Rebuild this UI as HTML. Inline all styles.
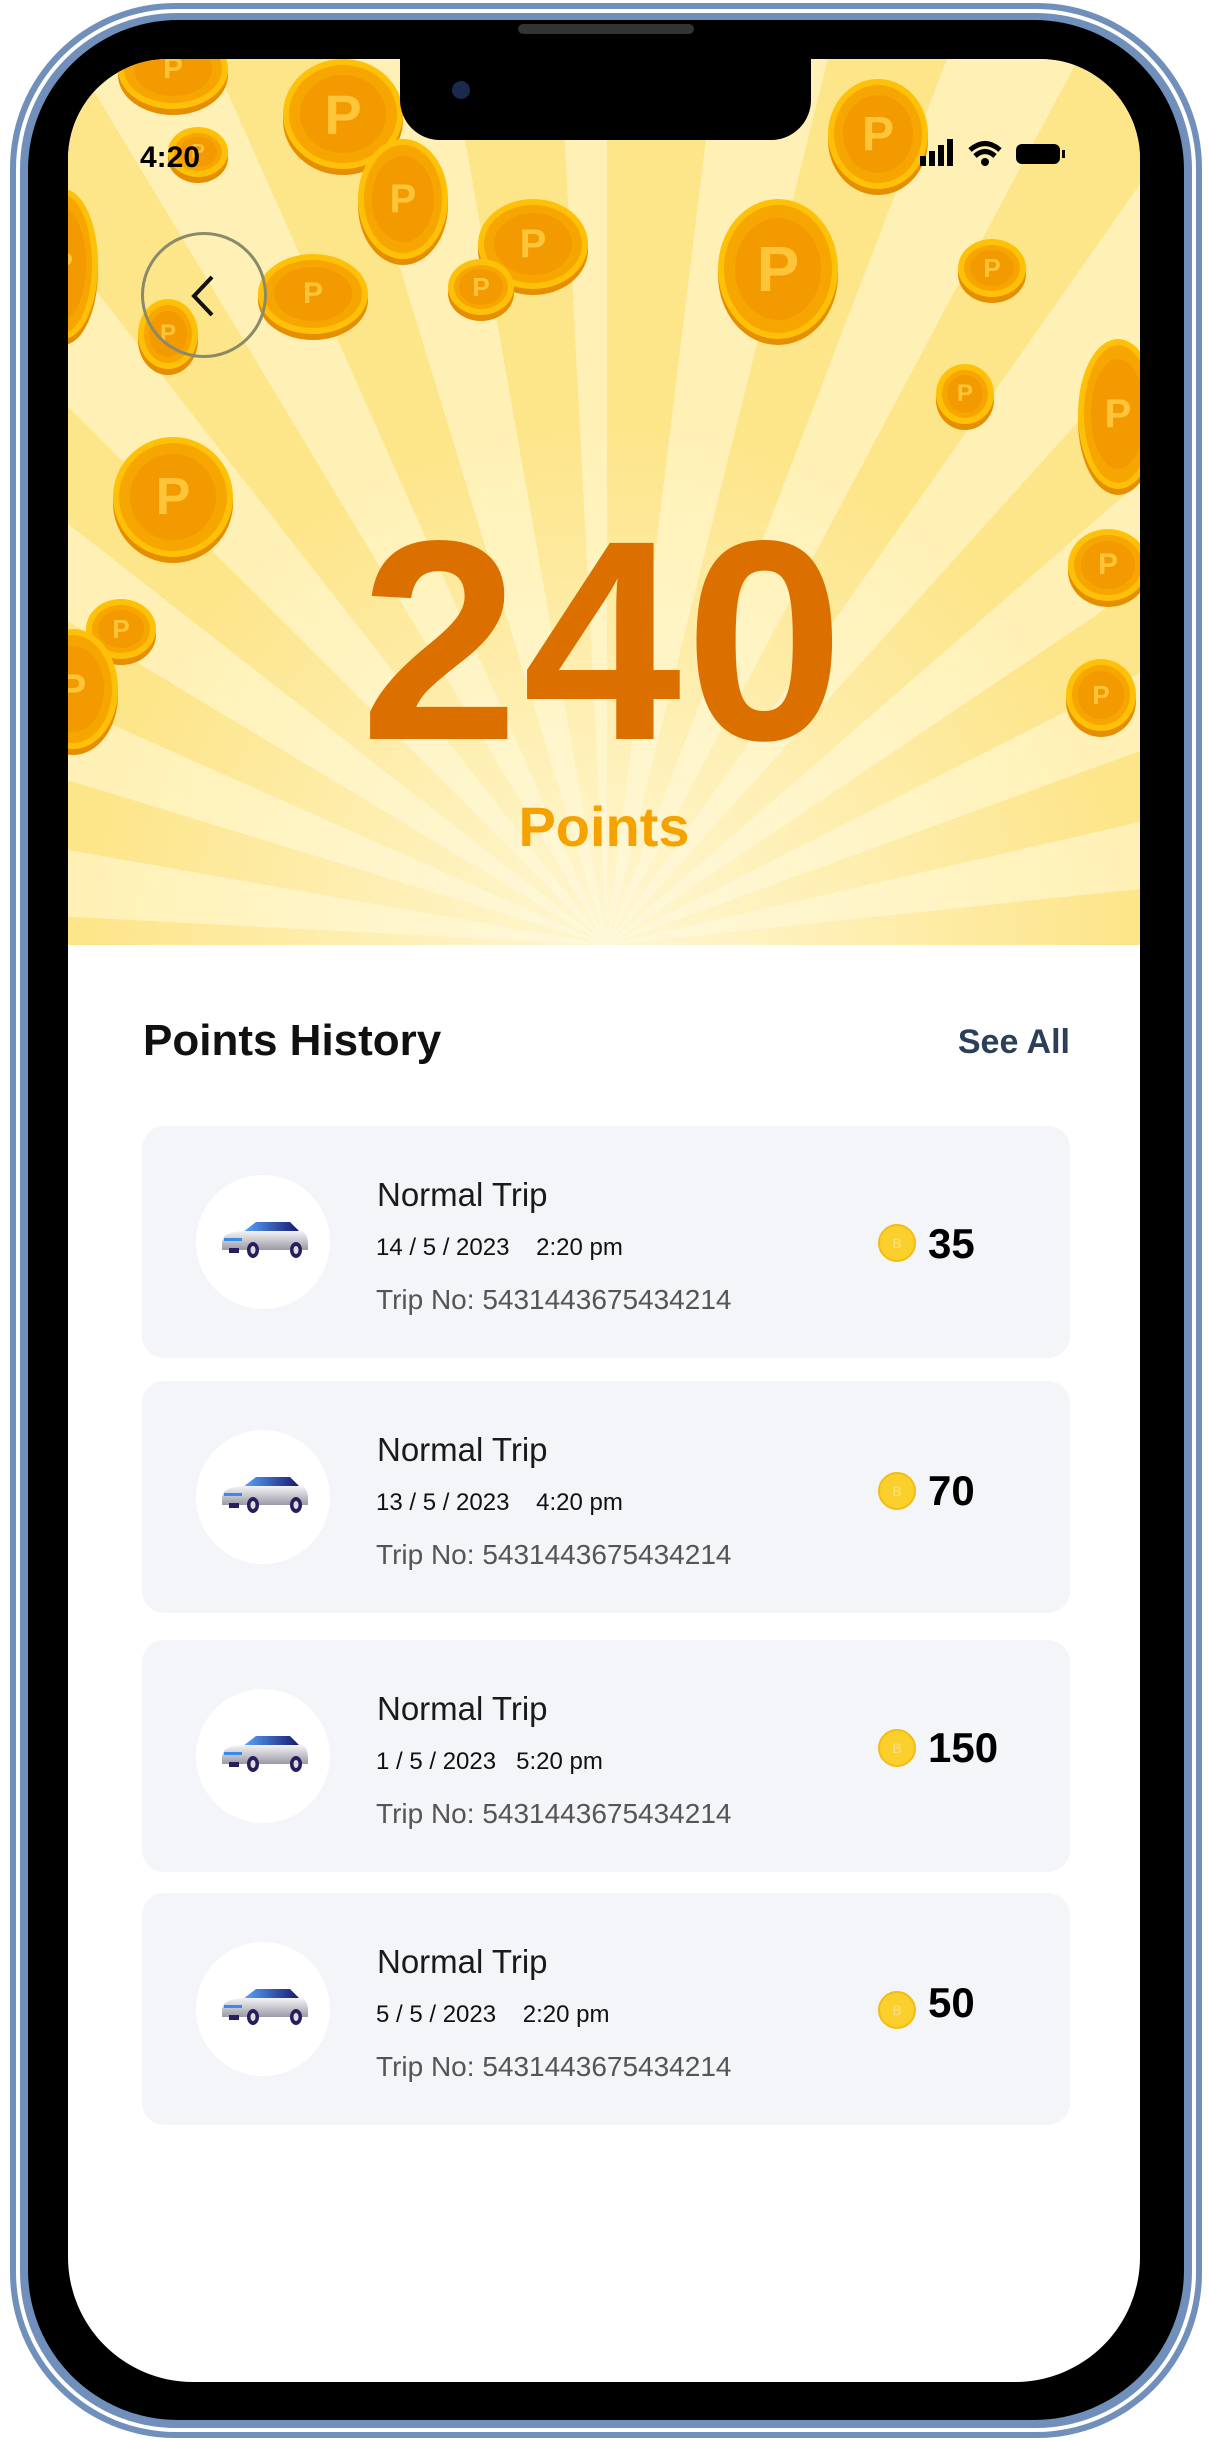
<!DOCTYPE html>
<html><head><meta charset="utf-8"><style>
*{margin:0;padding:0;box-sizing:border-box}
body{width:1208px;height:2440px;background:#fff;position:relative;overflow:hidden;font-family:"Liberation Sans",sans-serif}
.frame{position:absolute;left:10px;top:3px;width:1192px;height:2435px;border-radius:165px;background:#7090bb;}
.frame2{position:absolute;left:16px;top:9px;width:1180px;height:2423px;border-radius:160px;background:#fff;}
.frame3{position:absolute;left:20px;top:13px;width:1172px;height:2415px;border-radius:156px;background:#7090bb;}
.bezel{position:absolute;left:28px;top:20px;width:1156px;height:2400px;border-radius:150px;background:#000;}
.screen{position:absolute;left:68px;top:59px;width:1072px;height:2323px;border-radius:100px 100px 125px 125px;background:#fff;overflow:hidden}
.hdr{position:absolute;left:0;top:0;width:1072px;height:886px;background:
repeating-conic-gradient(from 0deg at 539px 886px,#fde58a 0deg 7deg,#fff1b6 7deg 14deg);}
.glow{position:absolute;left:0;top:0;width:1072px;height:886px;background:radial-gradient(ellipse 520px 520px at 539px 886px,rgba(255,250,225,.85),rgba(255,250,225,0) 100%)}
.coin{position:absolute;border-radius:50%;background:#f7a500;border:6px solid #ffc107;box-shadow:0 6px 0 #e58e00;color:#e98600;font-weight:bold;text-align:center}
.coin i{position:absolute;inset:10%;border-radius:50%;background:#f39a00;font-style:normal;display:flex;align-items:center;justify-content:center;color:#ffc53a}
.notch{position:absolute;left:332px;top:0;width:411px;height:81px;background:#000;border-radius:0 0 40px 40px}
.cam{position:absolute;left:52px;top:22px;width:18px;height:18px;border-radius:50%;background:#1a2a4a}
.time{position:absolute;left:72px;top:82px;font-size:30px;font-weight:bold;color:#000}
.back{position:absolute;left:73px;top:173px;width:126px;height:126px;border-radius:50%;border:3px solid #8a8a6a}
.big{position:absolute;left:0;width:1072px;top:440px;text-align:center;font-size:285px;font-weight:bold;color:#db6f00;line-height:1;letter-spacing:4px}
.pts{position:absolute;left:0;width:1072px;top:735px;text-align:center;font-size:56px;font-weight:bold;color:#f5a200}
.ph{position:absolute;left:75px;top:957px;font-size:44px;font-weight:bold;color:#111}
.see{position:absolute;right:70px;top:964px;font-size:34px;font-weight:bold;color:#2b3e5a}
.card{position:absolute;left:74px;width:928px;height:232px;border-radius:22px;background:#f4f5f9}
.circ{position:absolute;left:54px;top:49px;width:134px;height:134px;border-radius:50%;background:#fff}
.car{position:absolute;left:24px;top:45px}
.t1{position:absolute;left:235px;top:50px;font-size:33px;color:#1a1a1a}
.t2{position:absolute;left:234px;top:108px;font-size:24px;color:#111;white-space:pre}
.t3{position:absolute;left:234px;top:158px;font-size:28px;color:#555}
.gc{position:absolute;left:736px;top:98px;width:38px;height:38px;border-radius:50%;background:#fcd02c;border:2px solid #f2bd14;color:#f8e088;font-size:14px;text-align:center;line-height:34px}
.num{position:absolute;left:786px;top:94px;font-size:42px;font-weight:bold;color:#000}
</style></head><body>
<div class="frame"></div><div class="frame2"></div><div class="frame3"></div><div class="bezel"></div>
<div style="position:absolute;left:518px;top:24px;width:176px;height:10px;border-radius:5px;background:#333"></div>
<div class="screen">
<div class="hdr"></div><div class="glow"></div>
<div class="coin" style="left:215px;top:0px;width:120px;height:110px"><i style="font-size:56px">P</i></div>
<div class="coin" style="left:290px;top:80px;width:90px;height:120px"><i style="font-size:40px">P</i></div>
<div class="coin" style="left:410px;top:140px;width:110px;height:90px"><i style="font-size:40px">P</i></div>
<div class="coin" style="left:380px;top:200px;width:66px;height:56px"><i style="font-size:26px">P</i></div>
<div class="coin" style="left:190px;top:195px;width:110px;height:80px"><i style="font-size:30px">P</i></div>
<div class="coin" style="left:650px;top:140px;width:120px;height:140px"><i style="font-size:64px">P</i></div>
<div class="coin" style="left:760px;top:20px;width:100px;height:110px"><i style="font-size:48px">P</i></div>
<div class="coin" style="left:890px;top:180px;width:68px;height:58px"><i style="font-size:26px">P</i></div>
<div class="coin" style="left:868px;top:305px;width:58px;height:60px"><i style="font-size:24px">P</i></div>
<div class="coin" style="left:1010px;top:280px;width:80px;height:150px"><i style="font-size:40px">P</i></div>
<div class="coin" style="left:1000px;top:470px;width:80px;height:72px"><i style="font-size:30px">P</i></div>
<div class="coin" style="left:998px;top:600px;width:70px;height:72px"><i style="font-size:26px">P</i></div>
<div class="coin" style="left:45px;top:378px;width:120px;height:120px"><i style="font-size:52px">P</i></div>
<div class="coin" style="left:18px;top:540px;width:70px;height:60px"><i style="font-size:26px">P</i></div>
<div class="coin" style="left:-40px;top:570px;width:90px;height:120px"><i style="font-size:40px">P</i></div>
<div class="coin" style="left:-40px;top:130px;width:70px;height:150px"><i style="font-size:30px">P</i></div>
<div class="coin" style="left:70px;top:240px;width:60px;height:70px"><i style="font-size:24px">P</i></div>
<div class="coin" style="left:50px;top:-30px;width:110px;height:80px"><i style="font-size:30px">P</i></div>
<div class="coin" style="left:100px;top:68px;width:60px;height:50px"><i style="font-size:20px">P</i></div>
<div class="notch"><div class="cam"></div></div>
<div class="time">4:20</div>
<svg style="position:absolute;left:852px;top:75px" width="160" height="40" viewBox="0 0 160 40">
<rect x="0" y="22" width="6" height="10" fill="#000"/><rect x="9" y="17" width="6" height="15" fill="#000"/><rect x="18" y="11" width="6" height="21" fill="#000"/><rect x="27" y="5" width="6" height="27" fill="#000"/>
<path d="M50 16 Q65 3 80 16 M55 22 Q65 13 75 22" stroke="#000" stroke-width="5" fill="none"/><circle cx="65" cy="28" r="4" fill="#000"/>
<rect x="96" y="10" width="44" height="20" rx="6" fill="#000"/><rect x="142" y="16" width="3" height="8" fill="#000"/>
</svg>
<div class="back"></div>
<svg style="position:absolute;left:120px;top:215px" width="30" height="44" viewBox="0 0 30 44"><path d="M24 3 L6 22 L24 41" stroke="#111" stroke-width="4" fill="none"/></svg>
<div class="big">240</div>
<div class="pts">Points</div>
<div class="ph">Points History</div>
<div class="see">See All</div>

<div class="card" style="top:1067px"><div class="circ"><svg class="car" width="90" height="40" viewBox="0 0 90 40"><defs><linearGradient id="g" x1="0" x2="1"><stop offset="0" stop-color="#5aa6ff"/><stop offset="1" stop-color="#15176b"/></linearGradient><linearGradient id="b" x1="0" y1="0" x2="0" y2="1"><stop offset="0" stop-color="#f4f4f6"/><stop offset="1" stop-color="#9a9aa6"/></linearGradient></defs><path d="M23 12 L36 2 H70 L80 12 Z" fill="url(#g)"/><path d="M4 17 Q8 12 23 11 H82 Q88 14 88 24 V30 H2 V22 Z" fill="url(#b)"/><rect x="4" y="18" width="18" height="3" fill="#3a8af0"/><rect x="9" y="28" width="10" height="5" fill="#2a1d5e"/><ellipse cx="33" cy="30" rx="6" ry="8" fill="#2a1d5e"/><ellipse cx="33" cy="30" rx="2.5" ry="4" fill="#ddd"/><ellipse cx="76" cy="30" rx="6" ry="8" fill="#2a1d5e"/><ellipse cx="76" cy="30" rx="2.5" ry="4" fill="#ddd"/></svg></div>
<div class="t1">Normal Trip</div><div class="t2">14 / 5 / 2023    2:20 pm</div><div class="t3">Trip No: 5431443675434214</div><div class="gc">B</div><div class="num">35</div></div>

<div class="card" style="top:1322px"><div class="circ"><svg class="car" width="90" height="40" viewBox="0 0 90 40"><path d="M23 12 L36 2 H70 L80 12 Z" fill="url(#g)"/><path d="M4 17 Q8 12 23 11 H82 Q88 14 88 24 V30 H2 V22 Z" fill="url(#b)"/><rect x="4" y="18" width="18" height="3" fill="#3a8af0"/><rect x="9" y="28" width="10" height="5" fill="#2a1d5e"/><ellipse cx="33" cy="30" rx="6" ry="8" fill="#2a1d5e"/><ellipse cx="33" cy="30" rx="2.5" ry="4" fill="#ddd"/><ellipse cx="76" cy="30" rx="6" ry="8" fill="#2a1d5e"/><ellipse cx="76" cy="30" rx="2.5" ry="4" fill="#ddd"/></svg></div>
<div class="t1">Normal Trip</div><div class="t2">13 / 5 / 2023    4:20 pm</div><div class="t3">Trip No: 5431443675434214</div><div class="gc" style="top:91px">B</div><div class="num" style="top:86px">70</div></div>

<div class="card" style="top:1581px"><div class="circ"><svg class="car" width="90" height="40" viewBox="0 0 90 40"><path d="M23 12 L36 2 H70 L80 12 Z" fill="url(#g)"/><path d="M4 17 Q8 12 23 11 H82 Q88 14 88 24 V30 H2 V22 Z" fill="url(#b)"/><rect x="4" y="18" width="18" height="3" fill="#3a8af0"/><rect x="9" y="28" width="10" height="5" fill="#2a1d5e"/><ellipse cx="33" cy="30" rx="6" ry="8" fill="#2a1d5e"/><ellipse cx="33" cy="30" rx="2.5" ry="4" fill="#ddd"/><ellipse cx="76" cy="30" rx="6" ry="8" fill="#2a1d5e"/><ellipse cx="76" cy="30" rx="2.5" ry="4" fill="#ddd"/></svg></div>
<div class="t1">Normal Trip</div><div class="t2">1 / 5 / 2023   5:20 pm</div><div class="t3">Trip No: 5431443675434214</div><div class="gc" style="top:89px">B</div><div class="num" style="top:84px">150</div></div>

<div class="card" style="top:1834px"><div class="circ"><svg class="car" width="90" height="40" viewBox="0 0 90 40"><path d="M23 12 L36 2 H70 L80 12 Z" fill="url(#g)"/><path d="M4 17 Q8 12 23 11 H82 Q88 14 88 24 V30 H2 V22 Z" fill="url(#b)"/><rect x="4" y="18" width="18" height="3" fill="#3a8af0"/><rect x="9" y="28" width="10" height="5" fill="#2a1d5e"/><ellipse cx="33" cy="30" rx="6" ry="8" fill="#2a1d5e"/><ellipse cx="33" cy="30" rx="2.5" ry="4" fill="#ddd"/><ellipse cx="76" cy="30" rx="6" ry="8" fill="#2a1d5e"/><ellipse cx="76" cy="30" rx="2.5" ry="4" fill="#ddd"/></svg></div>
<div class="t1">Normal Trip</div><div class="t2">5 / 5 / 2023    2:20 pm</div><div class="t3">Trip No: 5431443675434214</div><div class="gc">B</div><div class="num" style="top:86px">50</div></div>
</div>
</body></html>
